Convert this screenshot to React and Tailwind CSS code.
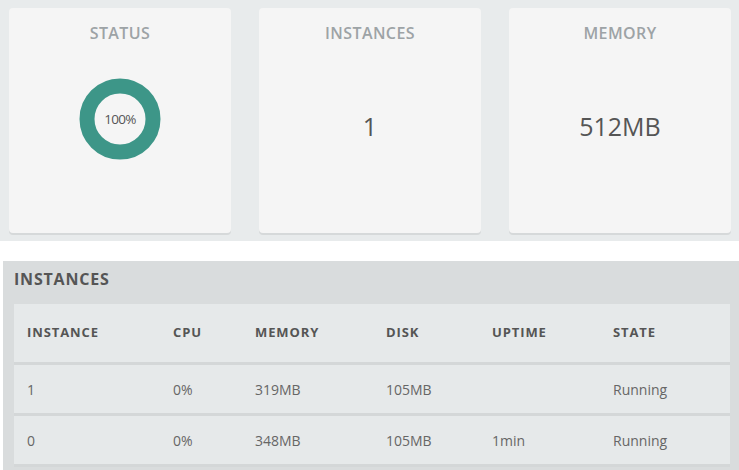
const stats = [
  { label: 'STATUS', kind: 'donut' },
  { label: 'INSTANCES', value: '1' },
  { label: 'MEMORY', value: '512MB' },
]

const columns = ['INSTANCE', 'CPU', 'MEMORY', 'DISK', 'UPTIME', 'STATE']

const rows = [
  ['1', '0%', '319MB', '105MB', '', 'Running'],
  ['0', '0%', '348MB', '105MB', '1min', 'Running'],
]

const font = { fontFamily: '"Open Sans", "Liberation Sans", sans-serif' }

const Donut = () => (
  <div className="relative w-[82px] h-[82px]">
    <svg width="82" height="82" viewBox="0 0 82 82">
      <circle cx="41" cy="41" r="33" fill="none" stroke="#3d9688" strokeWidth="15" />
    </svg>
    <span className="absolute inset-0 flex items-center justify-center text-[13.5px] text-[#555] tracking-[-0.7px]">
      100%
    </span>
  </div>
)

export default function App() {
  return (
    <div className="w-[739px] h-[470px] bg-white overflow-hidden" style={font}>
      {/* Stat cards */}
      <div className="bg-[#e8ebec] pt-[8px] pb-[8px] pl-[9px] pr-[8px] flex gap-[28px]">
        {stats.map((s) => (
          <div
            key={s.label}
            className="w-[222px] h-[225px] bg-[#f5f5f5] rounded-[4px] shadow-[0_2px_0_#d6d9da] flex flex-col items-center"
          >
            <div className="mt-[13px] text-[16px] font-semibold text-[#9da3a6] tracking-[0.4px]">
              {s.label}
            </div>
            {s.kind === 'donut' ? (
              <div className="flex-1 flex items-center justify-center pb-[40px]">
                <Donut />
              </div>
            ) : (
              <div className="flex-1 flex items-center justify-center pb-[24px]">
                <span className="text-[25px] text-[#555]">{s.value}</span>
              </div>
            )}
          </div>
        ))}
      </div>

      {/* Instances table */}
      <div className="mt-[20px] ml-[3px] bg-[#d9dcdd] h-[209px] flex flex-col">
        <div className="h-[43px] pl-[11px] pt-[6px] text-[16px] font-bold text-[#555] tracking-[0.8px]">
          INSTANCES
        </div>
        <div className="ml-[11px] mr-[9px] bg-[#e6e9ea]">
          <div className="grid grid-cols-[146px_82px_131px_106px_121px_1fr] pl-[13px] h-[61px] items-center border-b-[3px] border-[#d4d7d8] text-[13px] font-bold text-[#555] tracking-[0.9px]">
            {columns.map((c) => (
              <div key={c}>{c}</div>
            ))}
          </div>
          {rows.map((r, i) => (
            <div
              key={i}
              className="grid grid-cols-[146px_82px_131px_106px_121px_1fr] pl-[13px] h-[51px] items-center border-b-[3px] border-[#d4d7d8] text-[14px] text-[#666]"
            >
              {r.map((cell, j) => (
                <div key={j}>{cell}</div>
              ))}
            </div>
          ))}
        </div>
      </div>
    </div>
  )
}
